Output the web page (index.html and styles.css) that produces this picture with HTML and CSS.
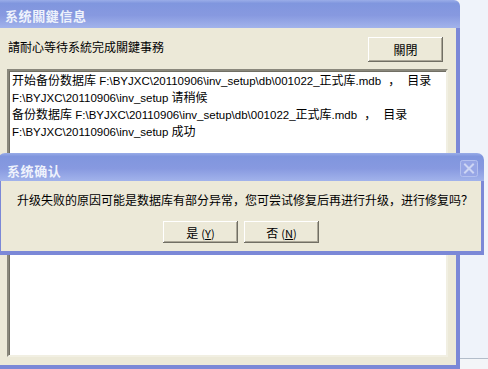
FILE: index.html
```html
<!DOCTYPE html>
<html lang="zh">
<head>
    <meta charset="UTF-8">
    <title>系统關鍵信息</title>
    <link rel="stylesheet" href="styles.css">
</head>
<body>
    <div class="screen">
        <div class="win">
            <div class="caption">
                <span class="caption-text">系统關鍵信息</span>
            </div>
            <div class="client">
                <div class="toprow">
                    <span class="hint">請耐心等待系統完成關鍵事務</span>
                    <button type="button" class="btn btn-close">關閉</button>
                </div>
                <div class="log">
                    <div class="line">开始备份数据库<span class="en"> F:\BYJXC\20110906\inv_setup\db\001022_</span>正式库<span class="en">.mdb</span><span class="comma">，</span>目录</div>
                    <div class="line"><span class="en">F:\BYJXC\20110906\inv_setup </span>请稍候</div>
                    <div class="line">备份数据库<span class="en"> F:\BYJXC\20110906\inv_setup\db\001022_</span>正式库<span class="en">.mdb</span><span class="comma">，</span>目录</div>
                    <div class="line"><span class="en">F:\BYJXC\20110906\inv_setup </span>成功</div>
                </div>
            </div>
        </div> <!-- 바깥 창 끝 -->
        <div class="desk"></div>
    </div>

    <!-- 확인 대화상자 (위에 겹쳐 뜸) -->
    <div class="msgbox">
        <div class="caption">
            <span class="caption-text">系统确认</span>
            <span class="x-btn">
                <svg width="18" height="17" viewBox="0 0 18 17">
                    <rect x="0.5" y="0.5" width="17" height="16" rx="2" fill="#97a6e6" stroke="#b4c0ef"/>
                    <path d="M5 4.5 L13 12.5 M13 4.5 L5 12.5" stroke="#cdd5f4" stroke-width="2" stroke-linecap="square"/>
                </svg>
            </span>
        </div>
        <div class="msg-body">
            <div class="msg">升级失败的原因可能是数据库有部分异常，您可尝试修复后再进行升级，进行修复吗？</div>
            <div class="actions">
                <button type="button" class="btn btn-dlg">是<span class="key">(<u>Y</u>)</span></button>
                <button type="button" class="btn btn-dlg">否<span class="key">(<u>N</u>)</span></button>
            </div>
        </div>
    </div>
</body>
</html>
```

FILE: styles.css
```css
body {
    margin: 0;
    background-color: #f3f5f8;
    font-family: "Noto Sans CJK SC", "Liberation Sans", sans-serif;
    font-size: 12px;
    color: #000;
    overflow: hidden;
}

div.screen {
    display: flex;
    width: 488px;
    height: 369px;
}

/* 바깥 창 */
div.win {
    width: 460px;
    height: 369px;
    display: flex;
    flex-direction: column;
    flex-shrink: 0;
}

div.caption {
    height: 28px;
    display: flex;
    align-items: center;
    padding-left: 5px;
    padding-top: 2px;
    box-sizing: border-box;
    background: linear-gradient(to bottom, #9aade8 0%, #8096de 12%, #8799e0 55%, #a2b3eb 100%);
    border-top-right-radius: 6px;
}

span.caption-text {
    color: #eef2fc;
    font-weight: bold;
    font-size: 13px;
    letter-spacing: 0.6px;
}

div.client {
    flex: 1;
    display: flex;
    flex-direction: column;
    background-color: #ece9d8;
    border-right: 4px solid #7b88d7;
    border-bottom: 4px solid #7b88d7;
    padding: 9px 8px 8px 7px;
}

div.toprow {
    display: flex;
    justify-content: space-between;
    align-items: flex-start;
    padding-left: 1px;
    padding-right: 5px;
}

span.hint {
    margin-top: 2px;
    line-height: 16px;
}

.btn {
    background-color: #ece9d8;
    border: none;
    font-family: "Noto Sans CJK SC", "Liberation Sans", sans-serif;
    font-size: 12px;
    color: #000;
    padding: 0;
    box-shadow: inset -1px -1px #716f64, inset 1px 1px #fff, inset -2px -2px #aca899;
}

.btn-close {
    width: 75px;
    height: 25px;
}

div.log {
    flex: 1;
    margin-top: 7px;
    background-color: #fff;
    border-top: 2px solid #8a887c;
    border-left: 2px solid #8a887c;
    border-right: 2px solid #f1efe2;
    border-bottom: 2px solid #f1efe2;
    box-shadow: inset 1px 1px #716f64;
    padding: 1px 3px;
}

div.line {
    line-height: 16px;
    white-space: nowrap;
}

span.en {
    font-family: "Liberation Sans", sans-serif;
    font-size: 11.5px;
}

span.comma {
    display: inline-block;
    box-sizing: border-box;
    width: 26px;
    padding-left: 7px;
    text-align: left;
}

div.desk {
    flex: 1;
    height: 358px;
    background-color: #eff3fa;
    border-bottom: 1px solid #b3bdca;
}

/* 확인 대화상자 */
div.msgbox {
    position: absolute;
    top: 153px;
    left: -2px;
    width: 486px;
}

div.msgbox div.caption {
    border-top-left-radius: 7px;
    border-top-right-radius: 7px;
    padding-left: 9px;
    justify-content: space-between;
    padding-right: 6px;
    padding-top: 0;
    align-items: flex-start;
}

div.msgbox span.caption-text {
    margin-top: 8px;
}

span.x-btn {
    margin-top: 7px;
    display: block;
    height: 17px;
}

div.msg-body {
    background-color: #ece9d8;
    border: 3px solid #7b88d7;
    border-top: none;
    border-bottom-width: 4px;
    padding: 11px 0 8px 16px;
}

div.msg {
    line-height: 16px;
    white-space: nowrap;
}

div.actions {
    display: flex;
    justify-content: center;
    gap: 6px;
    margin-top: 13px;
    padding-right: 16px;
}

.btn-dlg {
    width: 75px;
    height: 22px;
}

span.key {
    margin-left: 3px;
    font-size: 11px;
}
```
